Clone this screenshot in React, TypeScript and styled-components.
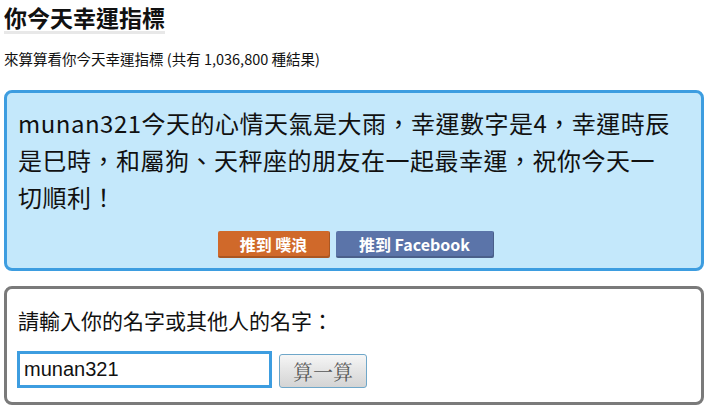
import styled, { createGlobalStyle } from "styled-components";

const GlobalStyle = createGlobalStyle`
  body {
    margin: 0;
    background: #ffffff;
    font-family: "Noto Sans CJK TC", "Noto Sans", sans-serif;
    color: #111;
  }
`;

const Page = styled.div`
  padding: 4px 7px 0 4px;
`;

const Title = styled.h1`
  display: inline-block;
  margin: 0;
  font-size: 23px;
  line-height: 27px;
  font-weight: 700;
  color: #111;
  border-bottom: 3px solid #e8e8e8;
`;

const Subtitle = styled.p`
  margin: 16px 0 0;
  font-size: 14.5px;
  line-height: 18px;
  color: #111;
`;

const Card = styled.div<{ $tone: "blue" | "gray" }>`
  border-radius: 8px;
  border: 3px solid ${(p) => (p.$tone === "blue" ? "#3d9de0" : "#7a7a7a")};
  background: ${(p) => (p.$tone === "blue" ? "#c4e8fb" : "#ffffff")};
`;

const ResultCard = styled(Card)`
  margin-top: 22px;
  padding: 11px 8px 10px 11px;
`;

const Result = styled.div`
  font-size: 24px;
  line-height: 37px;
  letter-spacing: 0.5px;
  color: #111;
  white-space: nowrap;
`;

const ShareRow = styled.div`
  display: flex;
  justify-content: center;
  gap: 6px;
  margin-top: 16px;
`;

const ShareButton = styled.button<{ $color: string; $width: number }>`
  width: ${(p) => p.$width}px;
  height: 27px;
  border: none;
  border-radius: 2px;
  background: ${(p) => p.$color};
  box-shadow: inset -1px -2px 0 rgba(0, 0, 0, 0.18);
  color: #fff;
  font-family: "Noto Sans CJK TC", "Noto Sans", sans-serif;
  font-weight: 700;
  font-size: 16px;
  line-height: 27px;
  padding: 0 0 2px;
  cursor: pointer;
`;

const FormCard = styled(Card)`
  margin-top: 15px;
  padding: 16px 11px 14px;
`;

const Label = styled.div`
  font-size: 21px;
  line-height: 30px;
  color: #111;
`;

const FormRow = styled.div`
  display: flex;
  align-items: center;
  gap: 7px;
  margin-top: 16px;
`;

const NameInput = styled.input`
  box-sizing: border-box;
  width: 255px;
  height: 37px;
  margin-left: -1px;
  border: 3px solid #3d9de0;
  padding: 0 4px;
  font-family: "Liberation Sans", Arial, sans-serif;
  font-size: 20px;
  color: #111;
  outline: none;
`;

const CalcButton = styled.button`
  box-sizing: border-box;
  width: 88px;
  height: 34px;
  margin-top: 3px;
  border: 1px solid #6fa7c9;
  border-radius: 3px;
  background: linear-gradient(#f6f6f6, #e4e4e4 50%, #d4d4d4);
  font-family: "Noto Serif CJK TC", "Liberation Serif", serif;
  font-size: 20px;
  color: #555;
  cursor: pointer;
`;

export default function App() {
  return (
    <Page>
      <GlobalStyle />
      <Title>你今天幸運指標</Title>
      <Subtitle>來算算看你今天幸運指標 (共有 1,036,800 種結果)</Subtitle>
      <ResultCard $tone="blue">
        <Result>
          munan321今天的心情天氣是大雨，幸運數字是4，幸運時辰
          <br />
          是巳時，和屬狗、天秤座的朋友在一起最幸運，祝你今天一
          <br />
          切順利！
        </Result>
        <ShareRow>
          <ShareButton $color="#d0692a" $width={112}>推到 噗浪</ShareButton>
          <ShareButton $color="#5b74a9" $width={158}>推到 Facebook</ShareButton>
        </ShareRow>
      </ResultCard>
      <FormCard $tone="gray">
        <Label>請輸入你的名字或其他人的名字：</Label>
        <FormRow>
          <NameInput defaultValue="munan321" />
          <CalcButton>算一算</CalcButton>
        </FormRow>
      </FormCard>
    </Page>
  );
}
